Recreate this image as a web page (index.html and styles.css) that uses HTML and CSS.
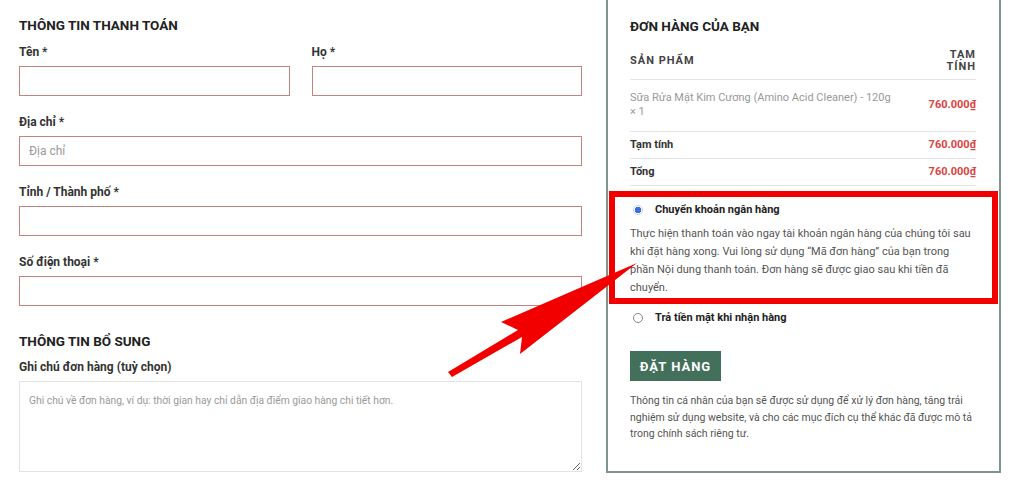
FILE: index.html
```html
<!DOCTYPE html>
<html lang="vi">
<head>
    <meta charset="UTF-8">
    <meta name="viewport" content="width=device-width, initial-scale=1.0">
    <title>Thanh toán</title>
    <link rel="stylesheet" href="styles.css">
</head>
<body>
    <div class="checkout">
        <div class="billing">
            <h3>THÔNG TIN THANH TOÁN</h3>
            <div class="row-2">
                <p class="field"><label for="first_name">Tên *</label><input type="text" id="first_name"></p>
                <p class="field"><label for="last_name">Họ *</label><input type="text" id="last_name"></p>
            </div>
            <p class="field"><label for="address">Địa chỉ *</label><input type="text" id="address" placeholder="Địa chỉ"></p>
            <p class="field"><label for="city">Tỉnh / Thành phố *</label><input type="text" id="city"></p>
            <p class="field"><label for="phone">Số điện thoại *</label><input type="text" id="phone"></p>

            <h3 class="extra-title">THÔNG TIN BỔ SUNG</h3>
            <p class="field last"><label for="notes">Ghi chú đơn hàng (tuỳ chọn)</label><textarea id="notes" placeholder="Ghi chú về đơn hàng, ví dụ: thời gian hay chỉ dẫn địa điểm giao hàng chi tiết hơn."></textarea></p>
        </div>

        <div class="order-box">
            <h3>ĐƠN HÀNG CỦA BẠN</h3>
            <table class="order-table">
                <thead>
                    <tr><th>SẢN PHẨM</th><th class="col-total">TẠM<br>TÍNH</th></tr>
                </thead>
                <tbody>
                    <tr class="item">
                        <td>Sữa Rửa Mặt Kim Cương (Amino Acid Cleaner) - 120g <span class="qty">× 1</span></td>
                        <td class="price">760.000₫</td>
                    </tr>
                    <tr class="sum">
                        <td>Tạm tính</td>
                        <td class="price">760.000₫</td>
                    </tr>
                    <tr class="sum">
                        <td>Tổng</td>
                        <td class="price">760.000₫</td>
                    </tr>
                </tbody>
            </table>

            <ul class="payment">
                <li class="method-item selected">
                    <div class="method"><span class="radio checked"></span>Chuyển khoản ngân hàng</div>
                    <p class="method-desc">Thực hiện thanh toán vào ngay tài khoản ngân hàng của chúng tôi sau khi đặt hàng xong. Vui lòng sử dụng “Mã đơn hàng” của bạn trong phần Nội dung thanh toán. Đơn hàng sẽ được giao sau khi tiền đã chuyển.</p>
                </li>
                <li class="method-item cod">
                    <div class="method"><span class="radio"></span>Trả tiền mặt khi nhận hàng</div>
                </li>
            </ul>

            <button class="place-order">ĐẶT HÀNG</button>
            <p class="privacy">Thông tin cá nhân của bạn sẽ được sử dụng để xử lý đơn hàng, tăng trải nghiệm sử dụng website, và cho các mục đích cụ thể khác đã được mô tả trong chính sách riêng tư.</p>
        </div>
    </div>

    <!-- mũi tên chú thích -->
    <svg class="arrow" width="1024" height="488" viewBox="0 0 1024 488">
        <polygon points="637,263 501,322 518,330 448,372 452,377 522,337 520,354" fill="#f20000"/>
    </svg>
</body>
</html>
```

FILE: styles.css
```css
body { margin: 0; font-family: Roboto, "Liberation Sans", Arial, sans-serif; color: #333; background: #fff; position: relative; height: 488px; overflow: hidden; }
.checkout { display: flex; align-items: flex-start; gap: 24px; padding-left: 19px; }

h3 { margin: 0 0 9px; font-size: 13.5px; line-height: 20px; font-weight: 700; color: #222; }

/* cột thông tin thanh toán */
.billing { width: 563px; padding-top: 15px; flex-shrink: 0; }
.row-2 { display: flex; gap: 22px; }
.row-2 .field { flex: 1; }
.field { margin: 0 0 18px; }
.field.last { margin-bottom: 0; }
label { display: block; font-size: 12px; line-height: 16px; font-weight: 700; color: #333; margin-bottom: 6px; }
input, textarea { display: block; width: 100%; box-sizing: border-box; font-family: inherit; font-size: 12px; color: #333; background: #fff; margin: 0; }
input { height: 30px; border: 1px solid #c4837d; padding: 0 9px; }
input::placeholder, textarea::placeholder { color: #9a9a9a; }
textarea { height: 91px; border: 1px solid #e3e3e3; padding: 12px 9px; font-size: 10.3px; line-height: 14px; resize: vertical; }
.extra-title { margin-top: 25px; margin-bottom: 8px; }

/* khung đơn hàng */
.order-box { width: 395px; box-sizing: border-box; flex-shrink: 0; margin-top: -10px; border: 2px solid #7f948b; padding: 24px 23px 28px 22px; }
.order-box h3 { margin-bottom: 7px; }
.order-table { width: 100%; border-collapse: collapse; margin-top: 0; }
.order-table th { font-size: 11px; line-height: 12px; font-weight: 700; letter-spacing: 1px; color: #444; text-align: left; padding: 6px 0; border-bottom: 1px solid #e4e4e4; vertical-align: middle; }
.order-table th.col-total { text-align: right; }
.order-table td { font-size: 11px; padding: 5px 0; line-height: 16px; border-bottom: 1px solid #e4e4e4; vertical-align: middle; }
.order-table tr.item td { padding: 11px 0 12px; line-height: 14px; color: #999; }
.order-table .qty { display: block; }
.order-table tr.sum td { font-weight: 700; color: #333; }
.order-table tr td.price { text-align: right; color: #d9443f; font-weight: 700; font-size: 11px; }

.payment { list-style: none; margin: 5px -22px 0 -21px; padding: 0; }
.method-item { padding: 0 22px 0 21px; }
.method-item.selected { border: 6px solid #f20000; padding: 4px 16px 1px 15px; }
.method-item.cod { margin-top: 5px; }
.method { display: flex; align-items: center; gap: 12px; font-size: 11px; line-height: 18px; font-weight: 700; color: #222; }
.radio { width: 10px; height: 10px; box-sizing: border-box; border-radius: 50%; border: 1px solid #8a8a8a; margin-left: 3px; background: #fff; }
.radio.checked { border-color: #c8cfe0; background: radial-gradient(circle, #3a6fe0 0 3px, #fff 3.5px); }
.method-desc { margin: 6px 0 0; font-size: 11px; line-height: 18px; color: #555; }

.place-order { display: block; margin-top: 24px; width: 91px; height: 30px; border: none; background: #42705a; color: #fff; font-family: inherit; font-size: 13px; font-weight: 700; letter-spacing: 1px; padding: 0; cursor: pointer; }
.privacy { margin: 12px 0 0; font-size: 10.5px; line-height: 16.5px; color: #555; }

.arrow { position: absolute; top: 0; left: 0; pointer-events: none; }
```
